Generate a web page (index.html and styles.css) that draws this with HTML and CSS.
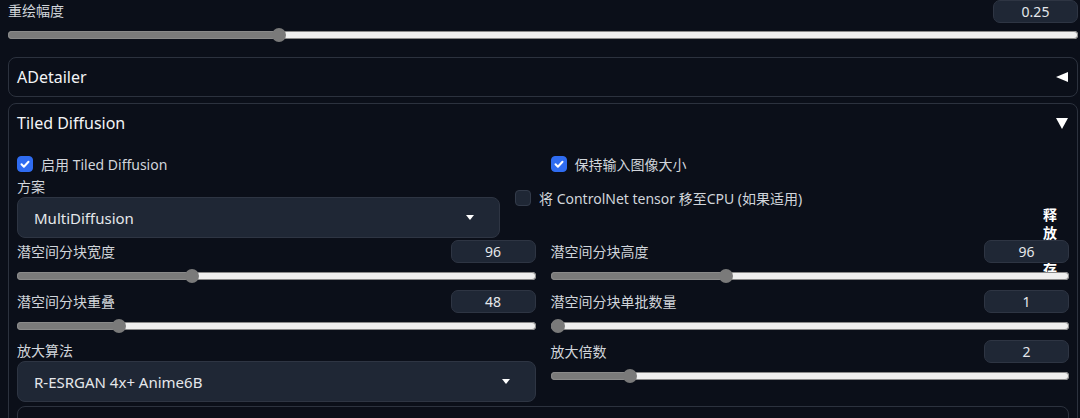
FILE: index.html
```html
<!DOCTYPE html>
<html lang="zh">
<head>
    <meta charset="UTF-8">
    <meta name="viewport" content="width=device-width, initial-scale=1.0">
    <title>Tiled Diffusion</title>
    <link rel="stylesheet" href="styles.css">
</head>
<body>
    <div class="page">
        <div class="slider-field top-field">
            <div class="field-head">
                <span class="field-label">重绘幅度</span>
                <span class="num">0.25</span>
            </div>
            <input type="range" class="range" min="0" max="1" step="0.01" value="0.25" style="--p:0.25">
        </div>

        <div class="accordion first">
            <div class="acc-head">
                <span>ADetailer</span>
                <span class="tri-left"></span>
            </div>
        </div>

        <div class="accordion">
            <div class="acc-head">
                <span>Tiled Diffusion</span>
                <span class="tri-down"></span>
            </div>
            <div class="acc-body">
                <div class="side-note">释放显存</div>

                <div class="two-col check-row">
                    <label class="check">
                        <span class="box on"><svg viewBox="0 0 16 16" width="16" height="16"><path d="M4.5 8.3l2.4 2.4 4.6-5" fill="none" stroke="#fff" stroke-width="2" stroke-linecap="round" stroke-linejoin="round"/></svg></span>
                        启用 Tiled Diffusion
                    </label>
                    <label class="check">
                        <span class="box on"><svg viewBox="0 0 16 16" width="16" height="16"><path d="M4.5 8.3l2.4 2.4 4.6-5" fill="none" stroke="#fff" stroke-width="2" stroke-linecap="round" stroke-linejoin="round"/></svg></span>
                        保持输入图像大小
                    </label>
                </div>

                <div class="method-row">
                    <div class="dropdown-field method">
                        <div class="field-label">方案</div>
                        <div class="dropdown"><span>MultiDiffusion</span><span class="caret"></span></div>
                    </div>
                    <label class="check cn-check">
                        <span class="box"></span>
                        将 ControlNet tensor 移至CPU (如果适用)
                    </label>
                </div>

                <div class="two-col params">
                    <div class="slider-field">
                        <div class="field-head">
                            <span class="field-label">潜空间分块宽度</span>
                            <span class="num">96</span>
                        </div>
                        <input type="range" class="range" min="16" max="256" step="16" value="96" style="--p:0.3333">
                    </div>
                    <div class="slider-field">
                        <div class="field-head">
                            <span class="field-label">潜空间分块高度</span>
                            <span class="num">96</span>
                        </div>
                        <input type="range" class="range" min="16" max="256" step="16" value="96" style="--p:0.3333">
                    </div>
                    <div class="slider-field">
                        <div class="field-head">
                            <span class="field-label">潜空间分块重叠</span>
                            <span class="num">48</span>
                        </div>
                        <input type="range" class="range" min="0" max="256" step="4" value="48" style="--p:0.1875">
                    </div>
                    <div class="slider-field">
                        <div class="field-head">
                            <span class="field-label">潜空间分块单批数量</span>
                            <span class="num">1</span>
                        </div>
                        <input type="range" class="range" min="1" max="8" step="1" value="1" style="--p:0">
                    </div>
                    <div class="dropdown-field">
                        <div class="field-label">放大算法</div>
                        <div class="dropdown"><span>R-ESRGAN 4x+ Anime6B</span><span class="caret"></span></div>
                    </div>
                    <div class="slider-field">
                        <div class="field-head">
                            <span class="field-label">放大倍数</span>
                            <span class="num">2</span>
                        </div>
                        <input type="range" class="range" min="1" max="8" step="0.05" value="2" style="--p:0.1429">
                    </div>
                </div>

                <div class="sub-block"></div>
            </div>
        </div>
    </div>
</body>
</html>
```

FILE: styles.css
```css
body {
    margin: 0;
    background-color: #0b0f19;
    color: #d1d5db;
    font-family: "Noto Sans", "Noto Sans CJK SC", sans-serif;
    font-size: 14px;
    overflow: hidden;
}
.page {
    padding: 0 2px 0 8px;
}
.field-head {
    display: flex;
    justify-content: space-between;
    align-items: center;
    height: 23px;
}
.top-field .field-head {
    height: 22px;
}
.field-label {
    color: #d1d5db;
    font-size: 14px;
    line-height: 20px;
}
.num {
    width: 85px;
    height: 23px;
    box-sizing: border-box;
    border: 1px solid #2e3543;
    border-radius: 7px;
    background-color: #1f2735;
    text-align: center;
    line-height: 21px;
    color: #e5e7eb;
}
.range {
    -webkit-appearance: none;
    appearance: none;
    display: block;
    width: 100%;
    height: 14px;
    margin: 6px 0 0;
    padding: 0;
    background: transparent;
}
.range::-webkit-slider-runnable-track {
    height: 8px;
    border-radius: 4px;
    background: linear-gradient(to right, #7a7a7a calc(7px + var(--p) * (100% - 14px)), #efefef 0);
    box-shadow: inset 0 0 0 1px #8a8a8a;
}
.range::-webkit-slider-thumb {
    -webkit-appearance: none;
    width: 14px;
    height: 14px;
    margin-top: -3px;
    border: none;
    border-radius: 50%;
    background-color: #7a7a7a;
}
.accordion {
    position: relative;
    z-index: 0;
    margin-top: 6px;
    border: 1px solid #2c323e;
    border-radius: 8px;
}
.accordion.first {
    margin-top: 15px;
}
.acc-head {
    display: flex;
    justify-content: space-between;
    align-items: center;
    height: 38px;
    padding: 0 9px 0 8px;
    font-size: 16px;
    color: #f3f4f6;
}
.tri-left {
    width: 0;
    height: 0;
    border-top: 5px solid transparent;
    border-bottom: 5px solid transparent;
    border-right: 12px solid #fff;
}
.tri-down {
    width: 0;
    height: 0;
    border-left: 6px solid transparent;
    border-right: 6px solid transparent;
    border-top: 11px solid #fff;
}
.acc-body {
    padding: 14px 8px 0;
}
.side-note {
    position: absolute;
    z-index: -1;
    top: 104px;
    right: 21px;
    writing-mode: vertical-rl;
    font-size: 14px;
    line-height: 14px;
    letter-spacing: 4px;
    font-weight: bold;
    color: #fff;
}
.two-col {
    display: grid;
    grid-template-columns: 1fr 1fr;
    column-gap: 15px;
}
.check {
    display: flex;
    align-items: center;
    gap: 8px;
    height: 16px;
    color: #d1d5db;
}
.box {
    width: 16px;
    height: 16px;
    box-sizing: border-box;
    border-radius: 4px;
    background-color: #1f2735;
    border: 1px solid #333b4a;
    flex-shrink: 0;
}
.box.on {
    background-color: #2f6cf1;
    border-color: #2f6cf1;
}
.box svg {
    display: block;
    margin: -1px;
}
.method-row {
    display: flex;
    align-items: flex-start;
    gap: 15px;
    margin-top: 5px;
}
.method {
    width: 483px;
}
.cn-check {
    margin-top: 13px;
}
.dropdown {
    display: flex;
    justify-content: space-between;
    align-items: center;
    height: 41px;
    box-sizing: border-box;
    padding: 0 25px 0 16px;
    border: 1px solid #2e3543;
    border-radius: 8px;
    background-color: #1f2735;
    font-size: 15px;
    color: #e5e7eb;
}
.caret {
    width: 0;
    height: 0;
    border-left: 4px solid transparent;
    border-right: 4px solid transparent;
    border-top: 5px solid #fff;
}
.params {
    margin-top: 2px;
    row-gap: 7px;
}
.params .dropdown-field {
    margin-top: 1px;
}
.sub-block {
    height: 30px;
    margin-top: 4px;
    border: 1px solid #2c323e;
    border-radius: 8px;
}
```
